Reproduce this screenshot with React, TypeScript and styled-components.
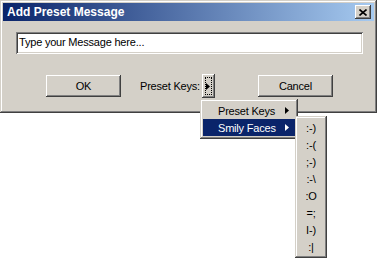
import styled, { createGlobalStyle } from 'styled-components';

const GlobalStyle = createGlobalStyle`
  body {
    margin: 0;
    background: #ffffff;
    font-family: "Liberation Sans", Arial, sans-serif;
    font-size: 11px;
    letter-spacing: -0.2px;
    color: #000000;
  }
`;

const raised = `
  box-shadow: inset -1px -1px #404040, inset 1px 1px #ffffff,
    inset -2px -2px #808080, inset 2px 2px #d4d0c8;
`;

const Page = styled.div`
  position: relative;
  width: 377px;
  height: 260px;
`;

const Window = styled.div`
  box-sizing: border-box;
  width: 377px;
  height: 113px;
  padding: 3px;
  background: #d4d0c8;
  box-shadow: inset -1px -1px #404040, inset 1px 1px #d4d0c8,
    inset -2px -2px #808080, inset 2px 2px #ffffff;
`;

const TitleBar = styled.div`
  display: flex;
  align-items: center;
  height: 18px;
  padding-left: 4px;
  background: linear-gradient(to right, #0a246a, #a6caf0);
  color: #ffffff;
  font-weight: bold;
  font-size: 12px;
  letter-spacing: 0;
`;

const Title = styled.span`
  flex: 1;
`;

const CloseButton = styled.div`
  display: flex;
  align-items: center;
  justify-content: center;
  width: 16px;
  height: 14px;
  margin-right: 3px;
  background: #d4d0c8;
  ${raised}
`;

const Content = styled.div`
  padding: 11px 0 0 13px;
`;

const MessageInput = styled.div`
  box-sizing: border-box;
  width: 347px;
  height: 22px;
  padding: 4px 3px;
  background: #ffffff;
  box-shadow: inset 1px 1px #808080, inset -1px -1px #ffffff,
    inset 2px 2px #404040, inset -2px -2px #d4d0c8;
`;

const ButtonRow = styled.div`
  display: flex;
  align-items: center;
  height: 24px;
  margin-top: 20px;
  padding-left: 30px;
`;

const PushButton = styled.div<{ $gap: number }>`
  display: flex;
  align-items: center;
  justify-content: center;
  width: 75px;
  height: 22px;
  margin-left: ${(p) => p.$gap}px;
  background: #d4d0c8;
  ${raised}
`;

const Label = styled.span`
  margin-left: 19px;
`;

const ArrowButton = styled.div`
  box-sizing: border-box;
  display: flex;
  align-items: center;
  justify-content: center;
  width: 13px;
  height: 24px;
  margin-left: 2px;
  padding: 3px;
  background: #d4d0c8;
  ${raised}
`;

const Focus = styled.div`
  display: flex;
  align-items: center;
  justify-content: center;
  width: 100%;
  height: 100%;
  border: 1px dotted #000000;
  box-sizing: border-box;
`;

const Menu = styled.div<{ $left: number; $top: number; $width: number }>`
  position: absolute;
  left: ${(p) => p.$left}px;
  top: ${(p) => p.$top}px;
  box-sizing: border-box;
  width: ${(p) => p.$width}px;
  padding: 3px;
  background: #d4d0c8;
  box-shadow: inset -1px -1px #404040, inset 1px 1px #d4d0c8,
    inset -2px -2px #808080, inset 2px 2px #ffffff;
`;

const MenuItem = styled.div<{ $active?: boolean }>`
  display: flex;
  align-items: center;
  height: 17px;
  padding: 0 6px 0 15px;
  background: ${(p) => (p.$active ? '#0a246a' : 'transparent')};
  color: ${(p) => (p.$active ? '#ffffff' : '#000000')};
`;

const ItemText = styled.span`
  flex: 1;
`;

const FaceItem = styled.div`
  display: flex;
  align-items: center;
  justify-content: center;
  height: 17px;
`;

const RightTriangle = ({ color }: { color: string }) => (
  <svg width="4" height="7" viewBox="0 0 4 7">
    <path d="M0 0 L4 3.5 L0 7 Z" fill={color} />
  </svg>
);

const faces = [':-)', ':-(', ';-)', ':-\\', ':O', '=;', 'I-)', ':|'];

export default function App() {
  return (
    <Page>
      <GlobalStyle />
      <Window>
        <TitleBar>
          <Title>Add Preset Message</Title>
          <CloseButton>
            <svg width="8" height="7" viewBox="0 0 8 7">
              <path d="M0.5 0.5 L7.5 6.5 M7.5 0.5 L0.5 6.5" stroke="#000" strokeWidth="1.6" />
            </svg>
          </CloseButton>
        </TitleBar>
        <Content>
          <MessageInput>Type your Message here...</MessageInput>
          <ButtonRow>
            <PushButton $gap={0}>OK</PushButton>
            <Label>Preset Keys:</Label>
            <ArrowButton>
              <Focus>
                <RightTriangle color="#000000" />
              </Focus>
            </ArrowButton>
            <PushButton $gap={43}>Cancel</PushButton>
          </ButtonRow>
        </Content>
      </Window>
      <Menu $left={200} $top={99} $width={98}>
        <MenuItem>
          <ItemText>Preset Keys</ItemText>
          <RightTriangle color="#000000" />
        </MenuItem>
        <MenuItem $active>
          <ItemText>Smily Faces</ItemText>
          <RightTriangle color="#ffffff" />
        </MenuItem>
      </Menu>
      <Menu $left={295} $top={116} $width={32}>
        {faces.map((f) => (
          <FaceItem key={f}>{f}</FaceItem>
        ))}
      </Menu>
    </Page>
  );
}
